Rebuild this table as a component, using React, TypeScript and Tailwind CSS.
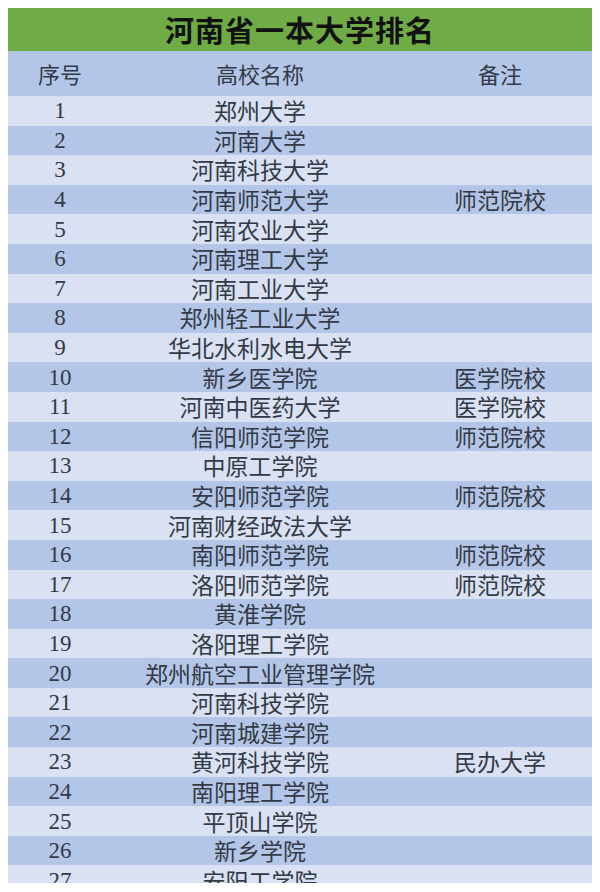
const rows: [string, string][] = [
  ["郑州大学", ""],
  ["河南大学", ""],
  ["河南科技大学", ""],
  ["河南师范大学", "师范院校"],
  ["河南农业大学", ""],
  ["河南理工大学", ""],
  ["河南工业大学", ""],
  ["郑州轻工业大学", ""],
  ["华北水利水电大学", ""],
  ["新乡医学院", "医学院校"],
  ["河南中医药大学", "医学院校"],
  ["信阳师范学院", "师范院校"],
  ["中原工学院", ""],
  ["安阳师范学院", "师范院校"],
  ["河南财经政法大学", ""],
  ["南阳师范学院", "师范院校"],
  ["洛阳师范学院", "师范院校"],
  ["黄淮学院", ""],
  ["洛阳理工学院", ""],
  ["郑州航空工业管理学院", ""],
  ["河南科技学院", ""],
  ["河南城建学院", ""],
  ["黄河科技学院", "民办大学"],
  ["南阳理工学院", ""],
  ["平顶山学院", ""],
  ["新乡学院", ""],
  ["安阳工学院", ""],
];

const cjk = "font-['Noto_Sans_CJK_SC',sans-serif]";

export default function App() {
  return (
    <div className="w-[600px] h-[892px] bg-white pt-2 px-2">
      <div className="h-[875px] overflow-hidden text-[#333a46]">
        <div className={`h-[43px] bg-[#6fac46] flex items-center justify-center text-[29px] font-bold text-[#111] tracking-[1px] ${cjk}`}>
          河南省一本大学排名
        </div>
        <div className={`h-[45px] bg-[#b4c6e7] grid grid-cols-[104px_296px_184px] items-center text-[22px] ${cjk}`}>
          <div className="text-center">序号</div>
          <div className="text-center">高校名称</div>
          <div className="text-center">备注</div>
        </div>
        {rows.map(([name, note], i) => (
          <div
            key={i}
            className={`h-[29.6px] grid grid-cols-[104px_296px_184px] items-center text-[23px] leading-[29px] ${
              i % 2 === 0 ? "bg-[#d9e1f2]" : "bg-[#b4c6e7]"
            }`}
          >
            <div className="text-center font-['Liberation_Serif',serif] text-[23px]">{i + 1}</div>
            <div className={`text-center ${cjk}`}>{name}</div>
            <div className={`text-center ${cjk}`}>{note}</div>
          </div>
        ))}
      </div>
    </div>
  );
}
